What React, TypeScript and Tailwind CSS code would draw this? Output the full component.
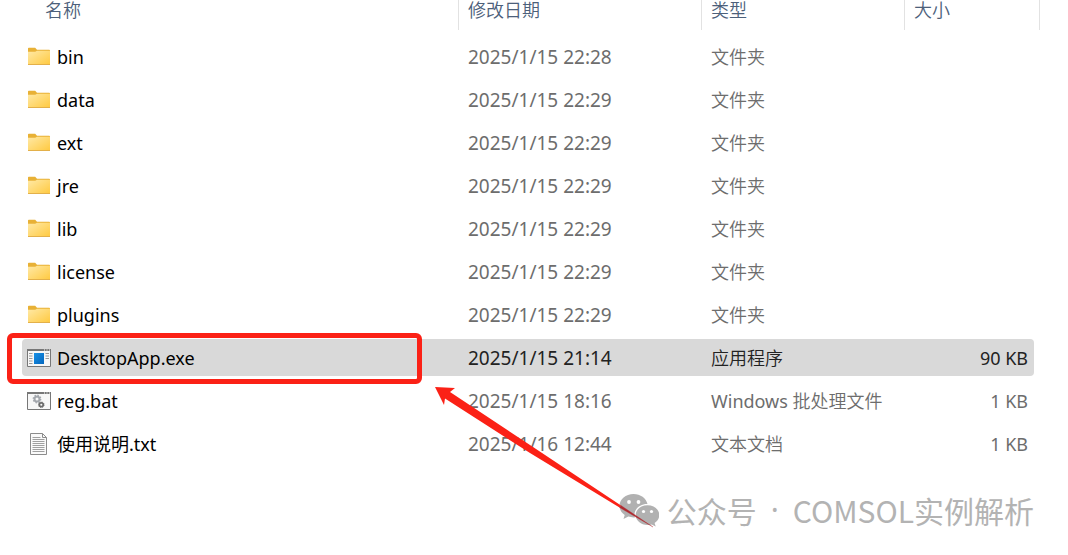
type Kind = "folder" | "exe" | "bat" | "txt";

type Entry = {
  name: string;
  kind: Kind;
  modified: string;
  product?: string;
  type: string;
  size?: string;
  selected?: boolean;
};

const folder = (name: string, time: string): Entry => ({
  name,
  kind: "folder",
  modified: `2025/1/15 ${time}`,
  type: "文件夹",
});

const entries: Entry[] = [
  folder("bin", "22:28"),
  folder("data", "22:29"),
  folder("ext", "22:29"),
  folder("jre", "22:29"),
  folder("lib", "22:29"),
  folder("license", "22:29"),
  folder("plugins", "22:29"),
  { name: "DesktopApp.exe", kind: "exe", modified: "2025/1/15 21:14", type: "应用程序", size: "90 KB", selected: true },
  { name: "reg.bat", kind: "bat", modified: "2025/1/15 18:16", product: "Windows ", type: "批处理文件", size: "1 KB" },
  { name: "使用说明.txt", kind: "txt", modified: "2025/1/16 12:44", type: "文本文档", size: "1 KB" },
];

function FileIcon({ kind }: { kind: Kind }) {
  return (
    <svg viewBox="0 0 24 24" className="size-6 shrink-0" aria-hidden="true">
      {kind === "folder" && (
        <>
          <defs>
            <linearGradient id="folderFace" x1="0" y1="0" x2="1" y2="1">
              <stop offset="0" stopColor="#ffe9a6" />
              <stop offset="1" stopColor="#ffc93f" />
            </linearGradient>
          </defs>
          <path d="M1 3.600a.8.8 0 0 1 .8-.8h6.400L10 4.800h12.200a.8.8 0 0 1 .8.8V9H1z" fill="#e8b136" />
          <path d="M1 6.800h7.200L10 5.800h13v13.400a.8.8 0 0 1-.8.8H1.800a.8.8 0 0 1-.8-.8z" fill="url(#folderFace)" />
          <path d="M1 19.500h22" stroke="#e3b04a" strokeWidth="1" />
        </>
      )}
      {kind === "exe" && (
        <>
          <defs>
            <linearGradient id="exePane" x1="0" y1="0" x2="1" y2="1">
              <stop offset="0" stopColor="#1690e6" />
              <stop offset="1" stopColor="#0567be" />
            </linearGradient>
          </defs>
          <path d="M.5 3.500h23v17H.5z" fill="#f7f7f7" stroke="#777" />
          <path d="M0 4h24" stroke="#777" strokeWidth="2" />
          <path d="M17 4h1M19.500 4h1M22 4h1" stroke="#fff" />
          <path d="M7 7h10v11H7z" fill="url(#exePane)" />
          <path d="M2 7.500h3.500M2 10h3.500M2 12.500h3.500M2 15h3.500M2 17.500h3.500M18.500 7.500H22M18.500 10H22M18.500 12.500H22" stroke="#999" />
        </>
      )}
      {kind === "bat" && (
        <>
          <path d="M.5 3.500h23v17H.5z" fill="#f7f7f7" stroke="#777" />
          <path d="M0 4h24" stroke="#777" strokeWidth="2" />
          <path d="M17 4h1M19.500 4h1M22 4h1" stroke="#fff" />
          <circle cx="10" cy="10" r="2.500" fill="none" stroke="#a3a7ad" strokeWidth="2" />
          <circle cx="10" cy="10" r="3.700" fill="none" stroke="#a3a7ad" strokeWidth="1.400" strokeDasharray="1.450 1.450" />
          <circle cx="14.300" cy="15.800" r="1.900" fill="none" stroke="#6b6b6b" strokeWidth="1.700" />
          <circle cx="14.300" cy="15.800" r="2.800" fill="none" stroke="#6b6b6b" strokeWidth="1" strokeDasharray="1.100 1.100" />
        </>
      )}
      {kind === "txt" && (
        <>
          <path d="M3.500 1.500h12l4 4v17h-16z" fill="#fafafa" stroke="#8c8c8c" />
          <path d="M15.500 1.500v4h4" fill="none" stroke="#8c8c8c" />
          <path d="M5.500 5.500h8M5.500 7.500h12M5.500 9.500h12M5.500 11.500h12M5.500 13.500h12M5.500 15.500h12M5.500 17.500h12M5.500 19.500h12" stroke="#a0a0a0" />
        </>
      )}
    </svg>
  );
}

function Callout() {
  return (
    <>
      <span className="pointer-events-none absolute -top-1.5 right-[37px] -bottom-2 -left-[15px] rounded-md border-5 border-[#fb2116]" />
      <svg
        viewBox="0 0 220 142"
        className="pointer-events-none absolute top-12 -right-[196px] z-10 h-[142px] w-[220px]"
        aria-hidden="true"
      >
        <path d="M0 0l20 1-5 4 80 53 91 60.500-1.500 2L95 66 10 11.500 9 18z" fill="#fb2116" />
        <path d="M186 118.500l32 21.500-33.500-19.500z" fill="#b02a30" stroke="#b02a30" strokeWidth=".3" />
      </svg>
    </>
  );
}

function ChatLogo() {
  return (
    <svg viewBox="0 0 40 34" className="h-[34px] w-10" aria-hidden="true">
      <path
        d="M14.500 1C6.800 1 .5 6.200.5 12.800c0 3.700 2 7 5.200 9.200L4.500 26l4.800-2.400c1.600.5 3.400.8 5.200.8h1.400c-.3-.9-.4-1.800-.4-2.700 0-6 5.700-10.700 12.500-10.700h.5C27.200 5.200 21.500 1 14.500 1z"
        fill="#b1b1b1"
      />
      <path
        d="M28.500 12.200c-6.600 0-11.800 4.300-11.800 9.900s5.200 9.900 11.800 9.900c1.500 0 2.900-.2 4.200-.6l4 2.100-1.100-3.500c2.900-1.800 4.700-4.700 4.700-7.900 0-5.600-5.200-9.900-11.800-9.900z"
        fill="#b1b1b1"
      />
      <g fill="#fff">
        <circle cx="10" cy="9" r="1.900" />
        <circle cx="19.500" cy="9" r="1.900" />
        <circle cx="24.500" cy="18.500" r="1.600" />
        <circle cx="32.500" cy="18.500" r="1.600" />
      </g>
    </svg>
  );
}

const headings = [
  { label: "名称", pad: "pl-[23px]", span: 1 },
  { label: "修改日期", pad: "pl-[9px]", span: 1 },
  { label: "类型", pad: "pl-[9px]", span: 1 },
  { label: "大小", pad: "pl-[9px]", span: 2 },
];

export default function App() {
  return (
    <main className="min-h-screen overflow-hidden bg-white pr-7 pl-[22px] font-['Noto_Sans','Noto_Sans_CJK_SC',sans-serif] text-[18px] leading-6">
      <table className="-mt-1.5 w-full table-fixed border-separate border-spacing-x-0 border-spacing-y-1.5">
        <colgroup>
          <col />
          <col className="w-[243px]" />
          <col className="w-[203px]" />
          <col className="w-[129px]" />
          <col className="w-1.5" />
        </colgroup>
        <thead>
          <tr className="h-8 text-left align-top text-[#4c607a]">
            {headings.map((h) => (
              <th key={h.label} colSpan={h.span} className="p-0 font-[350]">
                <div className={`h-[30px] border-r border-[#e2e2e2] leading-5 ${h.pad}`}>{h.label}</div>
              </th>
            ))}
          </tr>
        </thead>
        <tbody>
          {entries.map((e) => {
            const fill = e.selected ? "bg-[#d9d9d9] text-[#222]" : "text-[#6d6d6d]";
            return (
              <tr key={e.name} className="h-[37px]">
                <td className={`relative rounded-l-sm p-0 pl-[5px] ${fill}`}>
                  <div className="flex items-center gap-1.5 text-black">
                    <FileIcon kind={e.kind} />
                    {e.name}
                  </div>
                  {e.selected && <Callout />}
                </td>
                <td className={`p-0 pl-[9px] text-[19px] ${fill}`}>{e.modified}</td>
                <td className={`p-0 pl-[9px] font-[350] ${fill}`}>
                  {e.product && <span className="font-normal">{e.product}</span>}
                  {e.type}
                </td>
                <td className={`rounded-r-sm p-0 pr-1.5 text-right ${fill}`}>{e.size}</td>
                <td className="p-0" />
              </tr>
            );
          })}
        </tbody>
      </table>
      <div className="relative mt-5 mr-1.5 flex items-center justify-end gap-2 font-['Noto_Sans_CJK_SC',sans-serif] text-[30px] leading-11 text-[#b3b3b3]">
        <ChatLogo />
        <div className="flex gap-3.5 whitespace-nowrap">
          <span>公众号</span>
          <span className="font-['Noto_Sans',sans-serif]">·</span>
          <span>COMSOL实例解析</span>
        </div>
      </div>
    </main>
  );
}
